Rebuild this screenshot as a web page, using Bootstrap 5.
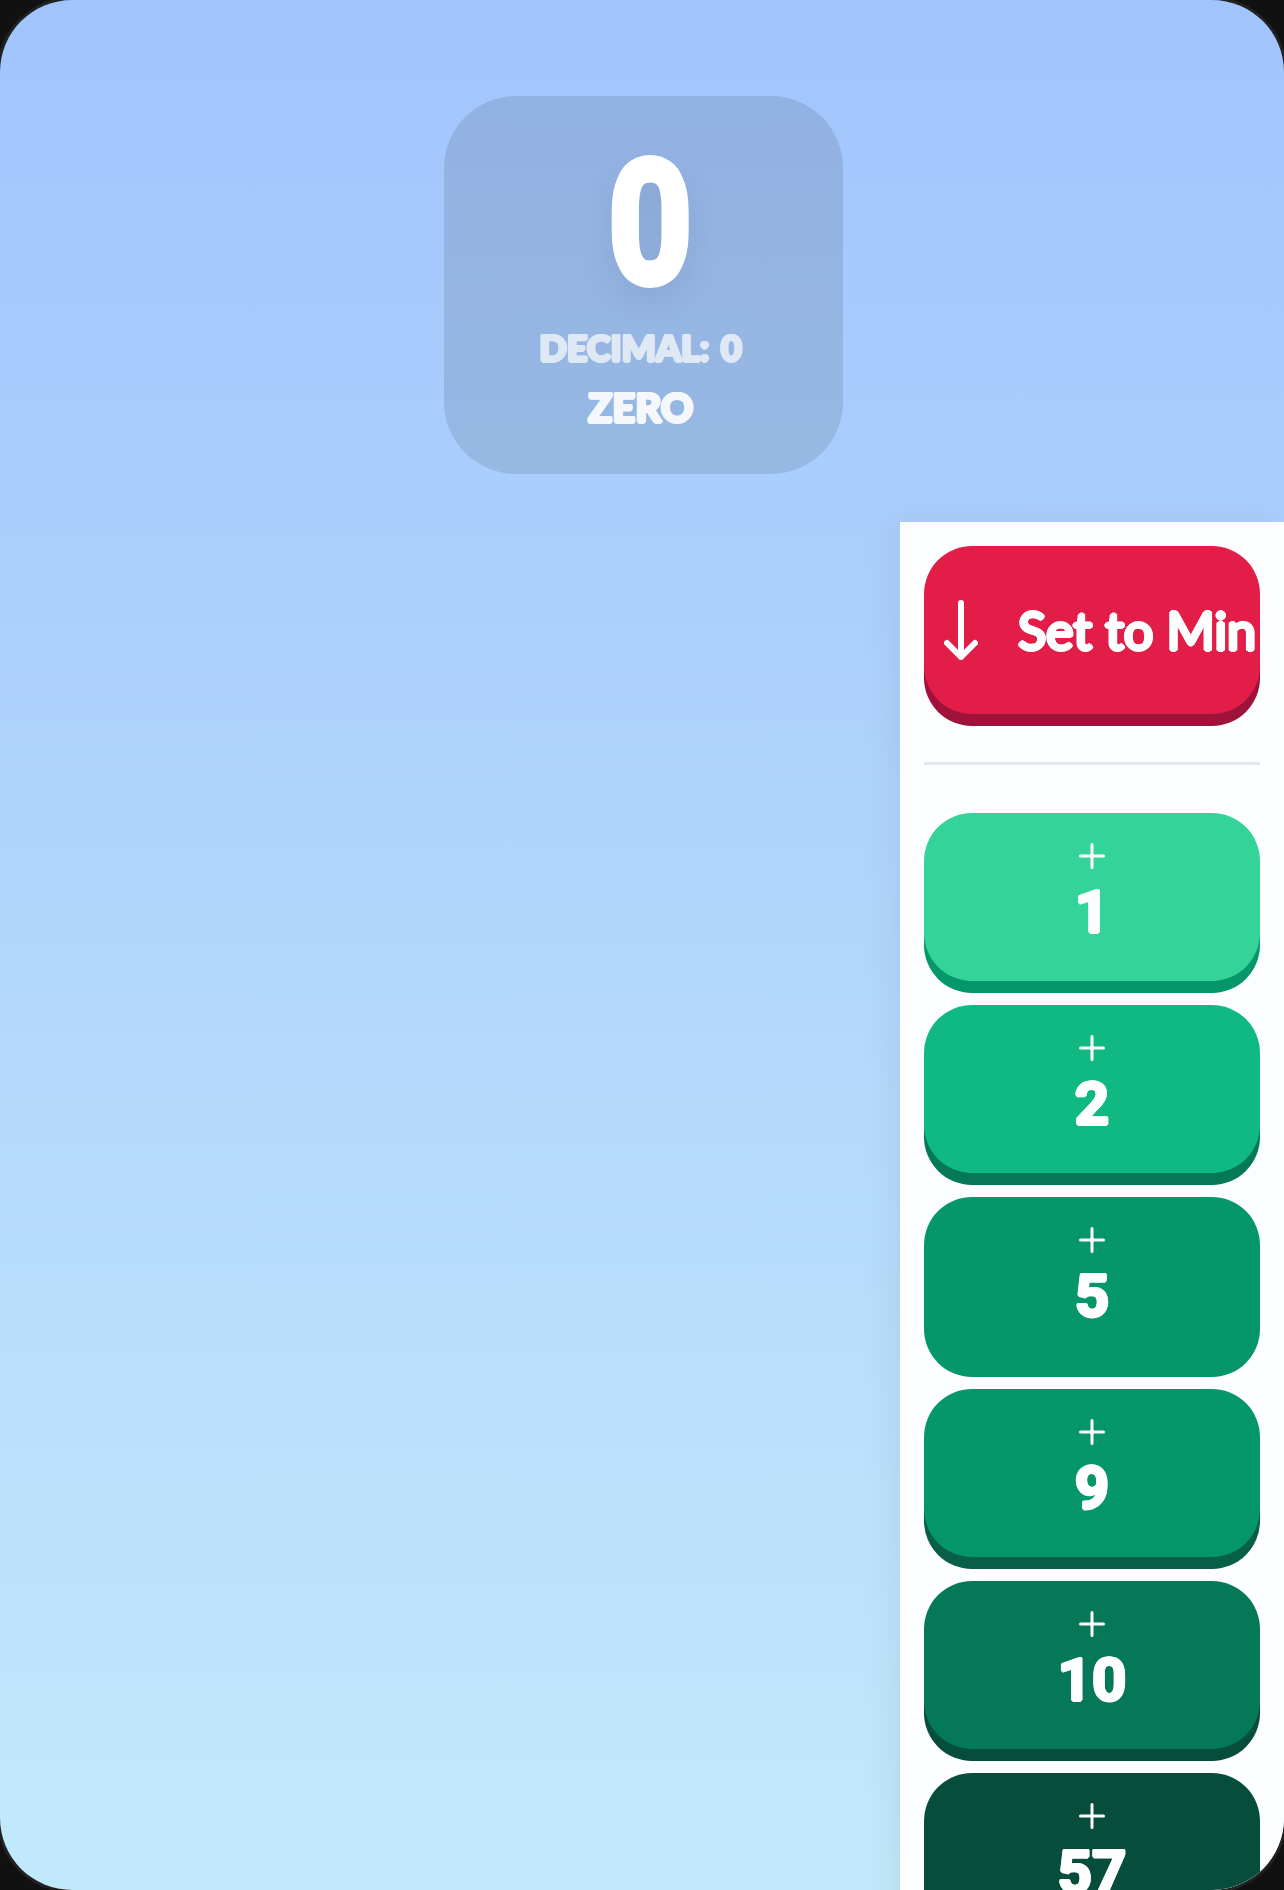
<!DOCTYPE html>
<html lang="en">
<head>
    <meta charset="UTF-8">
    <meta name="viewport" content="width=device-width, initial-scale=1.0">
    <title>Number Counter</title>
    <link href="https://cdn.jsdelivr.net/npm/bootstrap@5.3.0/dist/css/bootstrap.min.css" rel="stylesheet">
    <style>
        html, body { height: 100%; }
        body {
            background: #111;
            overflow: hidden;
            font-family: "Lato", "Liberation Sans", sans-serif;
            font-weight: 900;
        }

        /* phone shaped screen */
        .screen {
            width: 1284px;
            height: 1890px;
            border-radius: 72px;
            overflow: hidden;
            background: linear-gradient(180deg, #a1c4fd 0%, #c2e9fb 100%);
            box-shadow: 0 0 0 3px #222;
        }

        /* value card */
        .value-card {
            width: 399px;
            height: 378px;
            margin-top: 96px;
            margin-left: 444px;
            border-radius: 72px;
            background: rgba(0, 0, 0, .1);
            color: #fff;
        }
        .value-digit {
            height: 134px;
            margin-top: 61px;
            margin-left: 13px;
            font-family: "Roboto", "Liberation Sans", sans-serif;
            font-weight: 500;
            font-size: 166px;
            line-height: 134px;
            transform: scaleX(.86);
            text-shadow: 6px 0 #fff, -6px 0 #fff, 0 6px #fff, 0 -6px #fff,
                4px 4px #fff, -4px 4px #fff, 4px -4px #fff, -4px -4px #fff,
                0 16px 40px rgba(0, 0, 0, .12);
        }
        .value-decimal {
            margin-top: 40px;
            padding-right: 6px;
            font-size: 36px;
            line-height: 32px;
            word-spacing: 3px;
            opacity: .7;
        }
        .value-name {
            margin-top: 28px;
            padding-right: 6px;
            font-size: 40px;
            line-height: 32px;
            opacity: .9;
        }
        .puffy {
            text-shadow: 1.5px 0 currentColor, -1.5px 0 currentColor, 0 1.5px currentColor, 0 -1.5px currentColor,
                1px 1px currentColor, -1px 1px currentColor, 1px -1px currentColor, -1px -1px currentColor;
        }

        /* side panel */
        .side-panel {
            width: 384px;
            margin-top: 48px;
            margin-left: auto;
            background: rgba(255, 255, 255, .95);
            box-shadow: -8px 0 32px rgba(0, 0, 0, .06);
        }
        .step-btn {
            --face: #000;
            --edge: #000;
            height: 168px;
            flex: none;
            border: 0;
            border-radius: 48px;
            padding: 30px 0 0;
            background: var(--face);
            box-shadow: 0 12px 0 var(--edge);
            color: #fff;
        }
        .step-btn:hover, .step-btn:active { background: var(--face) !important; color: #fff !important; }
        .step-num {
            margin-top: 13px;
            font-family: "Roboto", "Liberation Sans", sans-serif;
            font-size: 60px;
            line-height: 60px;
            font-weight: 700;
        }
        .min-btn {
            padding: 0 0 0 20px;
            gap: 40px;
            font-size: 52px;
            white-space: nowrap;
            overflow: hidden;
        }
        .min-label {
            text-shadow: 2px 0 #fff, -2px 0 #fff, 0 2px #fff, 0 -2px #fff,
                1.4px 1.4px #fff, -1.4px 1.4px #fff, 1.4px -1.4px #fff, -1.4px -1.4px #fff;
        }
        .panel-rule {
            height: 3px;
            margin: 48px 0 48px;
            border: 0;
            background: #e2e8f0;
            opacity: 1;
        }
        .f-rose { --face: #e11d48; --edge: #9f1239; }
        .f-g1 { --face: #34d399; --edge: #059669; }
        .f-g2 { --face: #10b981; --edge: #047857; }
        .f-g3 { --face: #059669; --edge: #059669; }
        .f-g4 { --face: #059669; --edge: #065f46; }
        .f-g5 { --face: #047857; --edge: #064e3b; }
        .f-g6 { --face: #064e3b; --edge: #064e3b; }
    </style>
</head>
<body>
    <div class="screen d-flex flex-column">
        <!-- Value -->
        <div class="value-card d-flex flex-column align-items-center flex-shrink-0">
            <div class="value-digit">0</div>
            <div class="value-decimal puffy">DECIMAL: 0</div>
            <div class="value-name puffy">ZERO</div>
        </div>

        <!-- Controls -->
        <div class="side-panel flex-grow-1 p-4">
            <button type="button" class="btn step-btn min-btn f-rose d-flex align-items-center w-100">
                <svg width="34" height="60" viewBox="0 0 34 60" fill="none" stroke="#fff" stroke-width="6" stroke-linecap="round" stroke-linejoin="round">
                    <path d="M17 3V57M3 43L17 57L31 43"/>
                </svg>
                <span class="min-label">Set to Min</span>
            </button>
            <hr class="panel-rule">
            <div class="d-flex flex-column gap-4">
                <button type="button" class="btn step-btn f-g1 d-flex flex-column align-items-center">
                    <svg width="26" height="26" viewBox="0 0 26 26" stroke="#fff" stroke-width="3" stroke-linecap="round"><path d="M13 1.5V24.5M1.5 13H24.5"/></svg>
                    <span class="step-num puffy">1</span>
                </button>
                <button type="button" class="btn step-btn f-g2 d-flex flex-column align-items-center">
                    <svg width="26" height="26" viewBox="0 0 26 26" stroke="#fff" stroke-width="3" stroke-linecap="round"><path d="M13 1.5V24.5M1.5 13H24.5"/></svg>
                    <span class="step-num puffy">2</span>
                </button>
                <button type="button" class="btn step-btn f-g3 d-flex flex-column align-items-center">
                    <svg width="26" height="26" viewBox="0 0 26 26" stroke="#fff" stroke-width="3" stroke-linecap="round"><path d="M13 1.5V24.5M1.5 13H24.5"/></svg>
                    <span class="step-num puffy">5</span>
                </button>
                <button type="button" class="btn step-btn f-g4 d-flex flex-column align-items-center">
                    <svg width="26" height="26" viewBox="0 0 26 26" stroke="#fff" stroke-width="3" stroke-linecap="round"><path d="M13 1.5V24.5M1.5 13H24.5"/></svg>
                    <span class="step-num puffy">9</span>
                </button>
                <button type="button" class="btn step-btn f-g5 d-flex flex-column align-items-center">
                    <svg width="26" height="26" viewBox="0 0 26 26" stroke="#fff" stroke-width="3" stroke-linecap="round"><path d="M13 1.5V24.5M1.5 13H24.5"/></svg>
                    <span class="step-num puffy">10</span>
                </button>
                <button type="button" class="btn step-btn f-g6 d-flex flex-column align-items-center">
                    <svg width="26" height="26" viewBox="0 0 26 26" stroke="#fff" stroke-width="3" stroke-linecap="round"><path d="M13 1.5V24.5M1.5 13H24.5"/></svg>
                    <span class="step-num puffy">57</span>
                </button>
            </div>
        </div>
    </div>

    <script src="https://cdn.jsdelivr.net/npm/bootstrap@5.3.0/dist/js/bootstrap.bundle.min.js"></script>
</body>
</html>
